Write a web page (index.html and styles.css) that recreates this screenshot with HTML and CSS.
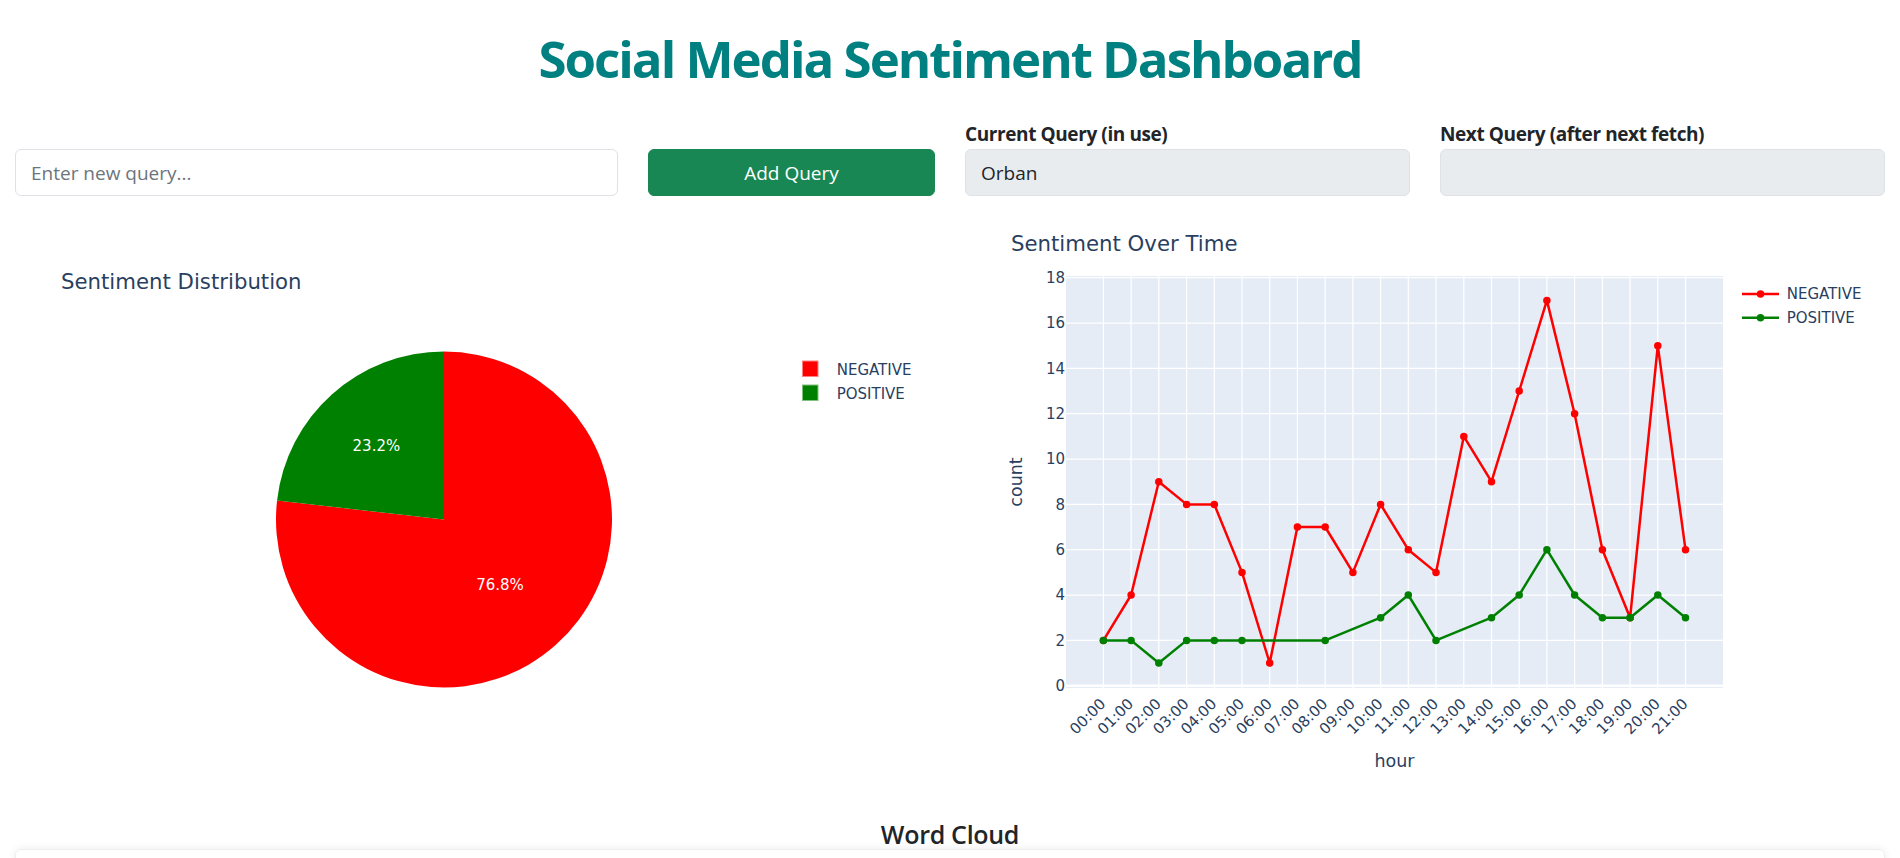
FILE: index.html
```html
<!DOCTYPE html>
<html lang="en">
<head>
<meta charset="utf-8">
<title>Social Media Sentiment Dashboard</title>
<link rel="stylesheet" href="styles.css">
</head>
<body>
<div class="app">
  <h1 class="title">Social Media Sentiment Dashboard</h1>

  <div class="controls">
    <div class="field">
      <input class="input" type="text" placeholder="Enter new query...">
    </div>
    <div class="field">
      <button class="btn" type="button">Add Query</button>
    </div>
    <div class="field">
      <label class="label">Current Query (in use)</label>
      <input class="input readonly" type="text" value="Orban" readonly>
    </div>
    <div class="field">
      <label class="label">Next Query (after next fetch)</label>
      <input class="input readonly" type="text" value="" readonly>
    </div>
  </div>

  <div class="charts">
    <div class="graph">
      <svg class="chart" width="920" height="600" viewBox="0 0 920 600" xmlns="http://www.w3.org/2000/svg">
        <text class="ptxt ptitle" x="46" y="83">Sentiment Distribution</text>
        <path fill="#ff0000" d="M429,313.5 L429,145.5 A168,168 0 1,1 262.07,294.54 Z"/>
        <path fill="#008000" d="M429,313.5 L262.07,294.54 A168,168 0 0,1 429,145.5 Z"/>
        <text class="slice-label" x="361.4" y="245" text-anchor="middle">23.2%</text>
        <text class="slice-label" x="485" y="383.5" text-anchor="middle">76.8%</text>
        <rect x="787.5" y="155" width="15.5" height="15.5" fill="#ff0000" stroke="#ff8080" stroke-width="1"/>
        <rect x="787.5" y="179" width="15.5" height="15.5" fill="#008000" stroke="#80c080" stroke-width="1"/>
        <text class="ptxt legend" x="821.7" y="168.5">NEGATIVE</text>
        <text class="ptxt legend" x="821.7" y="192.5">POSITIVE</text>
      </svg>
    </div>
    <div class="graph">
      <svg class="chart" width="920" height="600" viewBox="0 0 920 600" xmlns="http://www.w3.org/2000/svg">
        <text class="ptxt ptitle" x="46" y="44.7">Sentiment Over Time</text>
        <rect x="101" y="70" width="657" height="412" fill="#e5ecf6"/>
        <g class="grid">
          <line x1="138.4" y1="70" x2="138.4" y2="482"/>
          <line x1="166.1" y1="70" x2="166.1" y2="482"/>
          <line x1="193.8" y1="70" x2="193.8" y2="482"/>
          <line x1="221.6" y1="70" x2="221.6" y2="482"/>
          <line x1="249.3" y1="70" x2="249.3" y2="482"/>
          <line x1="277.0" y1="70" x2="277.0" y2="482"/>
          <line x1="304.7" y1="70" x2="304.7" y2="482"/>
          <line x1="332.4" y1="70" x2="332.4" y2="482"/>
          <line x1="360.2" y1="70" x2="360.2" y2="482"/>
          <line x1="387.9" y1="70" x2="387.9" y2="482"/>
          <line x1="415.6" y1="70" x2="415.6" y2="482"/>
          <line x1="443.3" y1="70" x2="443.3" y2="482"/>
          <line x1="471.0" y1="70" x2="471.0" y2="482"/>
          <line x1="498.8" y1="70" x2="498.8" y2="482"/>
          <line x1="526.5" y1="70" x2="526.5" y2="482"/>
          <line x1="554.2" y1="70" x2="554.2" y2="482"/>
          <line x1="581.9" y1="70" x2="581.9" y2="482"/>
          <line x1="609.6" y1="70" x2="609.6" y2="482"/>
          <line x1="637.4" y1="70" x2="637.4" y2="482"/>
          <line x1="665.1" y1="70" x2="665.1" y2="482"/>
          <line x1="692.8" y1="70" x2="692.8" y2="482"/>
          <line x1="720.5" y1="70" x2="720.5" y2="482"/>
          <line x1="101" y1="434.4" x2="758" y2="434.4"/>
          <line x1="101" y1="389.0" x2="758" y2="389.0"/>
          <line x1="101" y1="343.7" x2="758" y2="343.7"/>
          <line x1="101" y1="298.4" x2="758" y2="298.4"/>
          <line x1="101" y1="253.0" x2="758" y2="253.0"/>
          <line x1="101" y1="207.7" x2="758" y2="207.7"/>
          <line x1="101" y1="162.4" x2="758" y2="162.4"/>
          <line x1="101" y1="117.0" x2="758" y2="117.0"/>
          <line x1="101" y1="71.7" x2="758" y2="71.7"/>
          <line class="zero" x1="101" y1="479.7" x2="758" y2="479.7"/>
        </g>
        <g class="ptxt tick" text-anchor="end">
          <text x="100" y="485">0</text>
          <text x="100" y="439.6">2</text>
          <text x="100" y="394.2">4</text>
          <text x="100" y="348.9">6</text>
          <text x="100" y="303.6">8</text>
          <text x="100" y="258.2">10</text>
          <text x="100" y="212.9">12</text>
          <text x="100" y="167.6">14</text>
          <text x="100" y="122.2">16</text>
          <text x="100" y="76.9">18</text>
        </g>
        <g class="ptxt tick" text-anchor="end">
          <text transform="translate(137.9,495) rotate(-45)" dy="0.35em">00:00</text>
          <text transform="translate(165.6,495) rotate(-45)" dy="0.35em">01:00</text>
          <text transform="translate(193.3,495) rotate(-45)" dy="0.35em">02:00</text>
          <text transform="translate(221.1,495) rotate(-45)" dy="0.35em">03:00</text>
          <text transform="translate(248.8,495) rotate(-45)" dy="0.35em">04:00</text>
          <text transform="translate(276.5,495) rotate(-45)" dy="0.35em">05:00</text>
          <text transform="translate(304.2,495) rotate(-45)" dy="0.35em">06:00</text>
          <text transform="translate(331.9,495) rotate(-45)" dy="0.35em">07:00</text>
          <text transform="translate(359.7,495) rotate(-45)" dy="0.35em">08:00</text>
          <text transform="translate(387.4,495) rotate(-45)" dy="0.35em">09:00</text>
          <text transform="translate(415.1,495) rotate(-45)" dy="0.35em">10:00</text>
          <text transform="translate(442.8,495) rotate(-45)" dy="0.35em">11:00</text>
          <text transform="translate(470.5,495) rotate(-45)" dy="0.35em">12:00</text>
          <text transform="translate(498.3,495) rotate(-45)" dy="0.35em">13:00</text>
          <text transform="translate(526.0,495) rotate(-45)" dy="0.35em">14:00</text>
          <text transform="translate(553.7,495) rotate(-45)" dy="0.35em">15:00</text>
          <text transform="translate(581.4,495) rotate(-45)" dy="0.35em">16:00</text>
          <text transform="translate(609.1,495) rotate(-45)" dy="0.35em">17:00</text>
          <text transform="translate(636.9,495) rotate(-45)" dy="0.35em">18:00</text>
          <text transform="translate(664.6,495) rotate(-45)" dy="0.35em">19:00</text>
          <text transform="translate(692.3,495) rotate(-45)" dy="0.35em">20:00</text>
          <text transform="translate(720.0,495) rotate(-45)" dy="0.35em">21:00</text>
        </g>
        <text class="ptxt axis-title" x="429.5" y="560.7" text-anchor="middle">hour</text>
        <text class="ptxt axis-title" transform="translate(57,276) rotate(-90)" text-anchor="middle">count</text>

        <polyline class="trace neg" points="138.4,434.4 166.1,389.0 193.8,275.7 221.6,298.4 249.3,298.4 277.0,366.4 304.7,457.0 332.4,321.0 360.2,321.0 387.9,366.4 415.6,298.4 443.3,343.7 471.0,366.4 498.8,230.4 526.5,275.7 554.2,185.0 581.9,94.4 609.6,207.7 637.4,343.7 665.1,411.7 692.8,139.7 720.5,343.7"/>
        <g class="dots-neg">
          <circle cx="138.4" cy="434.4" r="3.75"/>
          <circle cx="166.1" cy="389.0" r="3.75"/>
          <circle cx="193.8" cy="275.7" r="3.75"/>
          <circle cx="221.6" cy="298.4" r="3.75"/>
          <circle cx="249.3" cy="298.4" r="3.75"/>
          <circle cx="277.0" cy="366.4" r="3.75"/>
          <circle cx="304.7" cy="457.0" r="3.75"/>
          <circle cx="332.4" cy="321.0" r="3.75"/>
          <circle cx="360.2" cy="321.0" r="3.75"/>
          <circle cx="387.9" cy="366.4" r="3.75"/>
          <circle cx="415.6" cy="298.4" r="3.75"/>
          <circle cx="443.3" cy="343.7" r="3.75"/>
          <circle cx="471.0" cy="366.4" r="3.75"/>
          <circle cx="498.8" cy="230.4" r="3.75"/>
          <circle cx="526.5" cy="275.7" r="3.75"/>
          <circle cx="554.2" cy="185.0" r="3.75"/>
          <circle cx="581.9" cy="94.4" r="3.75"/>
          <circle cx="609.6" cy="207.7" r="3.75"/>
          <circle cx="637.4" cy="343.7" r="3.75"/>
          <circle cx="665.1" cy="411.7" r="3.75"/>
          <circle cx="692.8" cy="139.7" r="3.75"/>
          <circle cx="720.5" cy="343.7" r="3.75"/>
        </g>
        <polyline class="trace pos" points="138.4,434.4 166.1,434.4 193.8,457.0 221.6,434.4 249.3,434.4 277.0,434.4 360.2,434.4 415.6,411.7 443.3,389.0 471.0,434.4 526.5,411.7 554.2,389.0 581.9,343.7 609.6,389.0 637.4,411.7 665.1,411.7 692.8,389.0 720.5,411.7"/>
        <g class="dots-pos">
          <circle cx="138.4" cy="434.4" r="3.75"/>
          <circle cx="166.1" cy="434.4" r="3.75"/>
          <circle cx="193.8" cy="457.0" r="3.75"/>
          <circle cx="221.6" cy="434.4" r="3.75"/>
          <circle cx="249.3" cy="434.4" r="3.75"/>
          <circle cx="277.0" cy="434.4" r="3.75"/>
          <circle cx="360.2" cy="434.4" r="3.75"/>
          <circle cx="415.6" cy="411.7" r="3.75"/>
          <circle cx="443.3" cy="389.0" r="3.75"/>
          <circle cx="471.0" cy="434.4" r="3.75"/>
          <circle cx="526.5" cy="411.7" r="3.75"/>
          <circle cx="554.2" cy="389.0" r="3.75"/>
          <circle cx="581.9" cy="343.7" r="3.75"/>
          <circle cx="609.6" cy="389.0" r="3.75"/>
          <circle cx="637.4" cy="411.7" r="3.75"/>
          <circle cx="665.1" cy="411.7" r="3.75"/>
          <circle cx="692.8" cy="389.0" r="3.75"/>
          <circle cx="720.5" cy="411.7" r="3.75"/>
        </g>

        <line class="trace neg" x1="777" y1="88" x2="814" y2="88"/>
        <circle class="dot-neg" cx="795.5" cy="88" r="3.75"/>
        <text class="ptxt legend" x="821.7" y="93.3">NEGATIVE</text>
        <line class="trace pos" x1="777" y1="111.7" x2="814" y2="111.7"/>
        <circle class="dot-pos" cx="795.5" cy="111.7" r="3.75"/>
        <text class="ptxt legend" x="821.7" y="117">POSITIVE</text>
      </svg>
    </div>
  </div>

  <h5 class="wc-title">Word Cloud</h5>
  <div class="wc-card"></div>
</div>
</body>
</html>
```

FILE: styles.css
```css
* {
  box-sizing: border-box;
}

html, body {
  margin: 0;
  padding: 0;
  background: #ffffff;
}

body {
  font-family: "Open Sans", "Noto Sans", "Liberation Sans", sans-serif;
  color: #212529;
  overflow: hidden;
}

.title {
  margin: 0;
  padding-top: 27px;
  text-align: center;
  color: #008080;
  font-size: 51px;
  font-weight: 700;
  line-height: 63px;
  letter-spacing: -2px;
}

.controls {
  display: grid;
  grid-template-columns: 603fr 287fr 445fr 445fr;
  column-gap: 30px;
  padding: 0 15px;
  margin-top: 29px;
  align-items: end;
}

.field {
  display: flex;
  flex-direction: column;
}

.label {
  display: block;
  font-size: 19px;
  font-weight: 700;
  line-height: 30px;
  letter-spacing: -0.4px;
  color: #212529;
}

.input {
  width: 100%;
  height: 47px;
  padding: 0 15px;
  border: 1px solid #dee2e6;
  border-radius: 6px;
  background: #ffffff;
  font-family: "Open Sans", "Noto Sans", sans-serif;
  font-size: 19px;
  color: #212529;
  outline: none;
}

.input::placeholder {
  color: #6c757d;
}

.readonly {
  background: #e9ecef;
}

.btn {
  width: 100%;
  height: 47px;
  border: 1px solid #198754;
  border-radius: 6px;
  background: #198754;
  color: #ffffff;
  font-family: "Open Sans", "Noto Sans", sans-serif;
  font-size: 19px;
  cursor: pointer;
}

.charts {
  display: grid;
  grid-template-columns: 1fr 1fr;
  column-gap: 30px;
  padding: 0 15px;
  margin-top: 10px;
}

.graph {
  height: 600px;
}

.chart {
  display: block;
}

.ptxt {
  font-family: "DejaVu Sans", Verdana, sans-serif;
  fill: #2a3f5f;
}

.ptitle {
  font-size: 21.25px;
}

.tick {
  font-size: 15px;
}

.legend {
  font-size: 15px;
}

.axis-title {
  font-size: 17.5px;
}

.slice-label {
  font-family: "DejaVu Sans", Verdana, sans-serif;
  font-size: 15px;
  fill: #ffffff;
}

.grid line {
  stroke: #ffffff;
  stroke-width: 1.25;
}

.grid .zero {
  stroke-width: 2.5;
}

.trace {
  fill: none;
  stroke-width: 2.5;
  stroke-linejoin: round;
}

.trace.neg {
  stroke: #ff0000;
}

.trace.pos {
  stroke: #008000;
}

.dots-neg circle,
.dot-neg {
  fill: #ff0000;
}

.dots-pos circle,
.dot-pos {
  fill: #008000;
}

.wc-title {
  margin: 13px 0 0;
  text-align: center;
  font-size: 25px;
  font-weight: 600;
  line-height: 30px;
  letter-spacing: -0.3px;
  color: #212529;
}

.wc-card {
  margin: 0 15px;
  height: 300px;
  border: 1px solid #eceef0;
  border-radius: 6px;
  box-shadow: 0 0 8px rgba(0, 0, 0, 0.08);
}
```
